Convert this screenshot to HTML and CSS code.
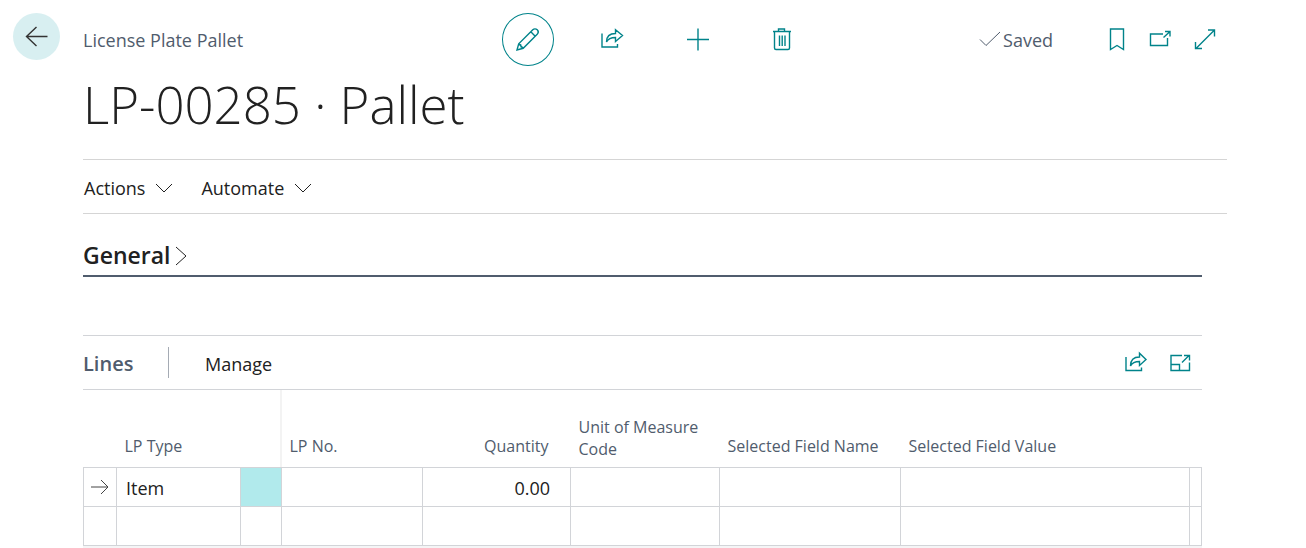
FILE: index.html
```html
<!DOCTYPE html>
<html lang="en">
<head>
<meta charset="utf-8">
<title>LP-00285 · Pallet</title>
<link rel="stylesheet" href="styles.css">
</head>
<body>
<div class="page">
  <div class="rail">
    <button class="back" aria-label="Back">
      <svg width="24" height="22" viewBox="0 0 24 22"><path d="M22.500 10.500H1.500M11.500 1L1.500 10.500l10 9.500"/></svg>
    </button>
  </div>
  <div class="content">
    <header class="topbar">
      <span class="caption">License Plate Pallet</span>
      <div class="tools">
        <button class="tool tool-active" aria-label="Edit">
          <svg width="24" height="24" viewBox="0 0 24 24"><path d="M1 22l1.700-6.200L16.800 1.800a3 3 0 0 1 4.400 4.400L7.200 20.300zM2.700 15.800l4.500 4.500M14.800 3.800l4.400 4.400M2.700 16.300l2 .6.400 2 2 .8"/></svg>
        </button>
        <button class="tool" aria-label="Share">
          <svg width="24" height="24" viewBox="0 0 24 24"><path d="M1 5.500v13.500h15.500v-3"/><path d="M5.500 14c0-6 3.500-8.500 9-8.500V1.700L21.500 7.500l-7 6V9.500c-4.500 0-7.500 1.500-9 4.500z"/></svg>
        </button>
        <button class="tool" aria-label="New">
          <svg width="24" height="24" viewBox="0 0 24 24"><path d="M12 0.500v22M1 11.500h22"/></svg>
        </button>
        <button class="tool" aria-label="Delete">
          <svg width="24" height="24" viewBox="0 0 24 24"><path d="M2 3.500h18M7.500 3.500V1h6v2.500M3.500 3.500v16.500q0 1.500 1.500 1.500h12q1.500 0 1.500-1.500V3.500M8.500 7.500v10.500M11.200 7.500v10.500M14 7.500v10.500"/></svg>
        </button>
      </div>
      <div class="status">
        <span class="saved"><svg width="22" height="18" viewBox="0 0 22 18"><path d="M1 8.500l6 6L21 1"/></svg>Saved</span>
        <div class="window-tools">
          <button class="small-tool" aria-label="Bookmark">
            <svg width="24" height="24" viewBox="0 0 24 24"><path d="M5.500 1h13v20.500L12 17.500l-6.500 4z"/></svg>
          </button>
          <button class="small-tool" aria-label="Open in new window">
            <svg width="24" height="24" viewBox="0 0 24 24"><path d="M14 6H1.500v11.500h17v-7.500M14.500 9.500l6.500-6M16 3.500h5v5"/></svg>
          </button>
          <button class="small-tool" aria-label="Expand">
            <svg width="24" height="24" viewBox="0 0 24 24"><path d="M3 20.500L21 2.500M15 2h6.500v6.500M2.500 14v6.500h6.500"/></svg>
          </button>
        </div>
      </div>
    </header>
    <h1 class="title">LP-00285 · Pallet</h1>
    <nav class="menu">
      <button class="menu-item">Actions<svg width="18" height="10" viewBox="0 0 18 10"><path d="M1 1l8 8 8-8"/></svg></button>
      <button class="menu-item">Automate<svg width="18" height="10" viewBox="0 0 18 10"><path d="M1 1l8 8 8-8"/></svg></button>
    </nav>
    <main class="sections">
      <h2 class="general"><button class="general-toggle">General<svg width="12" height="20" viewBox="0 0 12 20"><path d="M1 1l10 9-10 9"/></svg></button></h2>
      <section>
        <div class="lines-bar">
          <h2 class="lines-title">Lines</h2>
          <button class="manage">Manage</button>
          <div class="lines-tools">
            <button class="lines-tool" aria-label="Share lines">
              <svg width="24" height="24" viewBox="0 0 24 24"><path d="M2 6v13.500h15.500v-3"/><path d="M6.500 15c0-6 3.500-9 9-9V2.200L22 8.500l-6.500 6V10.500c-4.500 0-7.500 1.500-9 4.500z"/></svg>
            </button>
            <button class="lines-tool" aria-label="Focus mode">
              <svg width="24" height="24" viewBox="0 0 24 24"><path d="M14 4.500H3v15h18.500v-8M3 13.500h8.500v6M14 11.500l7-7M16 4.500h5.500v5"/></svg>
            </button>
          </div>
        </div>
        <table class="lines">
          <colgroup><col class="c-mark"><col class="c-type"><col class="c-more"><col class="c-no"><col class="c-qty"><col class="c-unit"><col class="c-name"><col><col class="c-end"></colgroup>
          <thead>
            <tr><th></th><th>LP Type</th><th class="freeze"></th><th>LP No.</th><th class="number">Quantity</th><th class="two-line">Unit of Measure Code</th><th>Selected Field Name</th><th>Selected Field Value</th><th></th></tr>
          </thead>
          <tbody>
            <tr><td class="mark"><svg width="18" height="16" viewBox="0 0 18 16"><path d="M0 8h17M10 1l7 7-7 7"/></svg></td><td>Item</td><td class="selected"></td><td></td><td class="number">0.00</td><td></td><td></td><td></td><td></td></tr>
            <tr><td></td><td></td><td></td><td></td><td></td><td></td><td></td><td></td><td></td></tr>
          </tbody>
        </table>
        <div class="lines-end"></div>
      </section>
    </main>
  </div>
</div>
</body>
</html>
```
FILE: styles.css
```css
* { box-sizing: border-box; }
body {
  margin: 0;
  background: #fff;
  color: #212121;
  font-family: "Segoe UI", "Open Sans", "Noto Sans", sans-serif;
  font-size: 18px;
  line-height: 24px;
}
button {
  margin: 0;
  padding: 0;
  border: 0;
  background: none;
  color: inherit;
  font: inherit;
  cursor: pointer;
}
h1, h2 { margin: 0; }
svg {
  display: block;
  flex: none;
  fill: none;
  stroke: currentColor;
  stroke-width: 1;
}
.page {
  display: grid;
  grid-template-columns: 83px minmax(0, 1fr) 79px;
  padding-top: 13px;
}
.rail { padding-left: 13px; }
.back {
  display: grid;
  place-items: center;
  width: 47px;
  height: 47px;
  border-radius: 50%;
  background: #d8eff1;
  color: #333;
}
.back svg { stroke-width: 1.400; }
.topbar {
  display: grid;
  grid-template-columns: 1fr auto 1fr;
  align-items: center;
  height: 53px;
}
.caption { color: #505c6d; }
.tools { display: flex; gap: 33px; }
.tool {
  display: grid;
  place-items: center;
  width: 52px;
  height: 53px;
  color: #00838a;
}
.tool svg, .small-tool svg, .lines-tool svg { stroke-width: 1.400; }
.tool-active { border: 1px solid #00838a; border-radius: 50%; }
.status {
  display: flex;
  justify-content: flex-end;
  align-items: center;
  gap: 42px;
}
.saved {
  display: flex;
  align-items: center;
  gap: 2px;
  color: #505c6d;
}
.window-tools { display: flex; }
.small-tool {
  display: grid;
  place-items: center;
  width: 44px;
  height: 44px;
  color: #00838a;
}
.title {
  padding: 2px 0 18px;
  font-size: 51px;
  font-weight: 300;
  line-height: 73px;
}
.menu {
  display: flex;
  gap: 28px;
  height: 55px;
  padding: 0 1px;
  border: solid #d5d5d5;
  border-width: 1px 0;
}
.menu-item {
  display: flex;
  align-items: center;
  gap: 10px;
  padding-top: 2px;
}
.sections { padding-right: 25px; }
.general {
  margin-bottom: 58px;
  padding: 23px 0 1px;
  border-bottom: 2px solid #505c6d;
  font-size: 23px;
  font-weight: 600;
  line-height: 37px;
}
.general-toggle { display: flex; align-items: center; gap: 4px; }
.lines-bar {
  display: flex;
  align-items: center;
  height: 55px;
  border: solid #d2d4d8;
  border-width: 1px 0;
}
.lines-title {
  width: 86px;
  padding-top: 2px;
  border-right: 1px solid #a5abb4;
  color: #505c6d;
  font-size: 20px;
  font-weight: 600;
  line-height: 29px;
}
.manage { margin-left: 36px; padding-top: 2px; }
.lines-tools { display: flex; margin-left: auto; }
.lines-tool {
  display: grid;
  place-items: center;
  width: 44px;
  height: 44px;
  color: #00838a;
}
.lines {
  width: 100%;
  border-collapse: collapse;
  table-layout: fixed;
}
.c-mark { width: 33px; }
.c-type { width: 124px; }
.c-more { width: 41px; }
.c-no { width: 141px; }
.c-qty { width: 148px; }
.c-unit { width: 149px; }
.c-name { width: 181px; }
.c-end { width: 12px; }
.lines th {
  height: 77px;
  padding: 0 0 10px 8px;
  color: #505c6d;
  font-size: 16px;
  font-weight: 400;
  line-height: 22px;
  text-align: left;
  vertical-align: bottom;
}
.lines .freeze { box-shadow: inset -2px 0 #f3f3f3; }
.lines td {
  height: 39px;
  padding: 2px 0 0 9px;
  border: 1px solid #d2d4d8;
}
.lines th.number { padding-right: 22px; text-align: right; }
.lines td.number { padding-right: 20px; text-align: right; }
.lines .two-line { padding-bottom: 7px; }
.lines .mark { padding: 0 0 0 7px; color: #444; }
.lines .selected { background: #b1eaec; }
.lines-end { height: 2px; background: #f5f5f6; }
```
